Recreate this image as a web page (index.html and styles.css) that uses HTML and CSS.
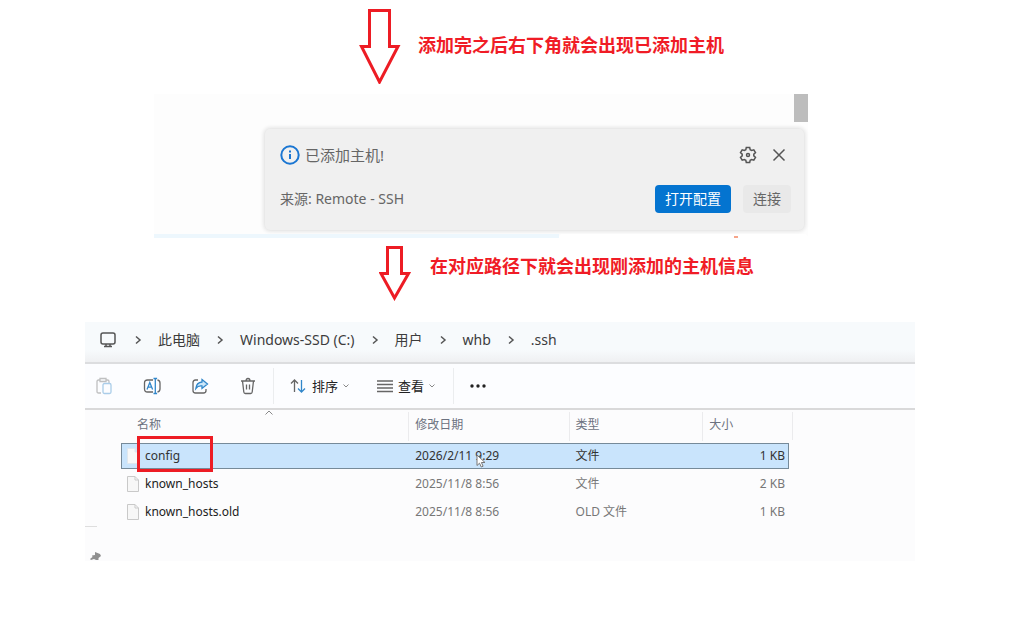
FILE: index.html
```html
<!DOCTYPE html>
<html lang="zh-CN">
<head>
<meta charset="utf-8">
<title>添加主机</title>
<link rel="stylesheet" href="styles.css">
</head>
<body>
<main class="page">
  <section class="step step-first">
    <svg class="arrow-large" width="42" height="76" viewBox="0 0 42 76"><path d="M10.500 2.500H30.500V38.500H39L20.500 74 2.500 38.500H10.500Z"/></svg>
    <h2 class="step-title">添加完之后右下角就会出现已添加主机</h2>
  </section>

  <section class="editor">
    <div class="scroll-thumb"></div>
    <div class="toast">
      <div class="toast-row toast-header">
        <svg class="info" width="20" height="20" viewBox="0 0 20 20"><circle cx="10" cy="10" r="8.700"/><path d="M10 9v5M10 5.500v2"/></svg>
        <p class="toast-title">已添加主机!</p>
        <button class="icon-button" aria-label="设置"><svg width="18" height="18" viewBox="0 0 18 18"><path d="M7.300 1.500h3.400l.5 2.200 1.400.8 2.200-.7 1.700 2.900-1.700 1.500v1.600l1.700 1.500-1.700 2.900-2.200-.7-1.400.8-.5 2.200H7.300l-.5-2.200-1.400-.8-2.200.7-1.700-2.900 1.700-1.500V8.200L1.500 6.700l1.700-2.900 2.200.7 1.400-.8z"/><circle cx="9" cy="9" r="1.500"/></svg></button>
        <button class="icon-button" aria-label="关闭"><svg width="14" height="14" viewBox="0 0 14 14"><path d="M1.500 1.500l11 11M12.500 1.500l-11 11"/></svg></button>
      </div>
      <div class="toast-row">
        <p class="toast-source">来源: Remote - SSH</p>
        <button class="button primary">打开配置</button>
        <button class="button">连接</button>
      </div>
    </div>
    <div class="status"><div class="status-blue"></div><div class="status-white"><i class="status-dot"></i></div></div>
  </section>

  <section class="step step-second">
    <svg class="arrow-small" width="32" height="56" viewBox="0 0 32 56"><path d="M8.500 2.500H22.500V28.500H29.500L15.500 53 2 28.500H8.500Z"/></svg>
    <h2 class="step-title">在对应路径下就会出现刚添加的主机信息</h2>
  </section>

  <section class="explorer">
    <nav class="crumbs" aria-label="路径">
      <svg class="line-icon" width="16" height="16" viewBox="0 0 16 16"><rect x="1" y="1" width="14" height="11" rx="2"/><path d="M6 12v2.500M10 12v2.500M4 14.500h8"/></svg>
      <svg class="chevron" width="8" height="10" viewBox="0 0 8 10"><path d="M2 1.500L6 5 2 8.500"/></svg>
      <a href="#">此电脑</a>
      <svg class="chevron" width="8" height="10" viewBox="0 0 8 10"><path d="M2 1.500L6 5 2 8.500"/></svg>
      <a href="#">Windows-SSD (C:)</a>
      <svg class="chevron" width="8" height="10" viewBox="0 0 8 10"><path d="M2 1.500L6 5 2 8.500"/></svg>
      <a href="#">用户</a>
      <svg class="chevron" width="8" height="10" viewBox="0 0 8 10"><path d="M2 1.500L6 5 2 8.500"/></svg>
      <a href="#">whb</a>
      <svg class="chevron" width="8" height="10" viewBox="0 0 8 10"><path d="M2 1.500L6 5 2 8.500"/></svg>
      <a href="#">.ssh</a>
    </nav>

    <div class="toolbar">
      <div class="tools">
        <button class="tool faded" aria-label="粘贴"><svg width="18" height="18" viewBox="0 0 18 18"><path d="M6 16H3.500Q2 16 2 14.500V4.500Q2 3 3.500 3H5M11 3h1.500Q14 3 14 4.500V6M5 1.500h6v3H5z"/><rect class="blue" x="8" y="6.500" width="8" height="10" rx="1.500"/></svg></button>
        <button class="tool" aria-label="重命名"><svg width="18" height="18" viewBox="0 0 18 18"><path d="M10 15H4.500Q1.500 15 1.500 12V6Q1.500 3 4.500 3H10M14.500 3Q17 3.500 17 6v6q0 2.500-2.500 3"/><path class="blue" d="M4 12.500L6.800 5.500 9.600 12.500M5 10.200h3.600M12.300 2v14M10.500 1.500h3.600M10.500 16.500h3.600"/></svg></button>
        <button class="tool" aria-label="共享"><svg width="18" height="18" viewBox="0 0 18 18"><path d="M7 3H4.500Q2 3 2 5.500v8Q2 16 4.500 16h8q2.500 0 2.500-2.500V12"/><path class="blue tint" d="M11 2.500L16.500 7 11 11.500V9Q7 8.500 4.800 11.500 5.500 5.500 11 5z"/></svg></button>
        <button class="tool" aria-label="删除"><svg width="18" height="18" viewBox="0 0 18 18"><path d="M2 4h14M3.500 4L4.800 15Q5 16.500 6.300 16.500h5.400Q13 16.500 13.200 15L14.500 4M7 4Q7 1.500 9 1.500T11 4M7.500 7.500v5M10.500 7.500v5"/></svg></button>
      </div>
      <div class="group">
        <button class="menu-button">
          <svg width="18" height="16" viewBox="0 0 18 16"><path d="M5.500 14V2M2 5.500L5.500 2 9 5.500"/><path class="blue" d="M12.500 2v12M9 10.500l3.500 3.500 3.500-3.500"/></svg>
          <span>排序</span>
          <svg class="caret" width="6" height="4" viewBox="0 0 6 4"><path d="M.5.500L3 3 5.500.500"/></svg>
        </button>
        <button class="menu-button">
          <svg width="16" height="14" viewBox="0 0 16 14"><path d="M0 2h16M0 5.500h16M0 9h16M0 12.500h16"/></svg>
          <span>查看</span>
          <svg class="caret" width="6" height="4" viewBox="0 0 6 4"><path d="M.5.500L3 3 5.500.500"/></svg>
        </button>
      </div>
      <div class="group">
        <button class="tool" aria-label="更多"><svg class="dots" width="18" height="18" viewBox="0 0 18 18"><circle cx="3" cy="9" r="1.700"/><circle cx="9" cy="9" r="1.700"/><circle cx="15" cy="9" r="1.700"/></svg></button>
      </div>
    </div>

    <div class="files">
      <div class="rail">
        <div class="rail-line"></div>
        <svg class="pin" width="12" height="9" viewBox="0 0 12 9"><path d="M5 0l5 2 1 2-2.500 2v2H6L4 7 1 8 0 7l2.500-2-.5-1.500L5 3z"/></svg>
      </div>
      <table class="list">
        <colgroup><col class="c-name"><col class="c-date"><col class="c-type"><col class="c-size"></colgroup>
        <thead>
          <tr>
            <th scope="col">名称<svg class="sort-mark" width="8" height="5" viewBox="0 0 8 5"><path d="M.5 4.500L4 1l3.500 3.500"/></svg></th>
            <th scope="col">修改日期</th><th scope="col">类型</th><th scope="col">大小</th>
          </tr>
        </thead>
        <tbody>
          <tr class="selected">
            <td><div class="file"><svg class="doc" width="12" height="16" viewBox="0 0 12 16"><path d="M.5.500h7.500l3.500 3.500v11.500H.5zM8 .500v3.500h3.500"/></svg>config</div><span class="highlight"></span></td>
            <td>2026/2/11 9:29<svg class="cursor" width="10" height="14" viewBox="0 0 10 14"><path d="M1 1v10.500l2.500-2.300L5.300 13l1.800-.8-1.700-3.700H9z"/></svg></td>
            <td>文件</td><td>1 KB</td>
          </tr>
          <tr>
            <td><div class="file"><svg class="doc" width="12" height="16" viewBox="0 0 12 16"><path d="M.5.500h7.500l3.500 3.500v11.500H.5zM8 .500v3.500h3.500"/></svg>known_hosts</div></td>
            <td>2025/11/8 8:56</td><td>文件</td><td>2 KB</td>
          </tr>
          <tr>
            <td><div class="file"><svg class="doc" width="12" height="16" viewBox="0 0 12 16"><path d="M.5.500h7.500l3.500 3.500v11.500H.5zM8 .500v3.500h3.500"/></svg>known_hosts.old</div></td>
            <td>2025/11/8 8:56</td><td>OLD 文件</td><td>1 KB</td>
          </tr>
        </tbody>
      </table>
    </div>
  </section>
</main>
</body>
</html>
```

FILE: styles.css
```css
* { box-sizing: border-box; }

body {
  margin: 0;
  background: #fff;
  color: #333;
  font: 14px/20px "Noto Sans", "Noto Sans CJK SC", sans-serif;
}

h2, p { margin: 0; }

button {
  margin: 0;
  padding: 0;
  border: 0;
  background: none;
  color: inherit;
  font: inherit;
}

svg {
  display: block;
  flex: none;
  fill: none;
  stroke: #666;
}

/* Steps */
.step { display: flex; align-items: center; }
.step-first { padding: 8px 0 10px 359px; gap: 17px; }
.step-second { padding: 7px 0 21px 379px; gap: 19px; }

.step-title {
  padding-bottom: 4px;
  color: #f01c26;
  font: bold 18px/24px "Noto Sans CJK SC", sans-serif;
}

.step-second .step-title { padding-bottom: 16px; }

.arrow-large, .arrow-small { stroke: #ed1c24; stroke-width: 3; }

/* Editor with notification */
.editor {
  display: flex;
  flex-direction: column;
  margin: 0 215px 0 154px;
  background: #fdfdfd;
}

.scroll-thumb {
  align-self: flex-end;
  width: 14px;
  height: 28px;
  background: #bdbdbd;
}

.toast {
  display: flex;
  flex-direction: column;
  gap: 20px;
  margin: 7px 4px 0 111px;
  padding: 16px 13px 17px 15px;
  border-radius: 5px;
  background: #f0f0f0;
  box-shadow: 0 0 4px 1px #dcdcdc;
  color: #666;
}

.toast-row { display: flex; align-items: center; }
.toast-header { padding-right: 3px; }
.toast-title { flex: 1; margin-left: 5px; font-size: 15px; }
.info { stroke: #1a76d2; stroke-width: 2; }

.icon-button {
  display: grid;
  place-items: center;
  width: 18px;
  height: 20px;
  margin-left: 13px;
}

.icon-button svg { stroke: #555; stroke-width: 1.500; }

.toast-source { flex: 1; }

.button {
  height: 28px;
  margin-left: 12px;
  padding: 0 10px;
  border-radius: 4px;
  background: #e9e9e9;
}

.button.primary { background: #0474d0; color: #fff; }

.status { display: flex; height: 4px; margin-top: 4px; }
.status-blue { width: 62%; background: #edf7fd; }
.status-white {
  display: flex;
  flex: 1;
  align-items: flex-end;
  justify-content: flex-end;
  padding-right: 70px;
  border-radius: 4px 4px 0 0;
  background: #fff;
}
.status-dot { width: 4px; height: 2px; background: #f6a58a; }

/* File explorer */
.explorer { margin: 0 108px 0 85px; background: #fcfcfd; }

.crumbs {
  display: flex;
  align-items: center;
  gap: 16px;
  height: 42px;
  padding: 0 15px 4px;
  border-bottom: 2px solid #dcdddf;
  background: linear-gradient(#f7fafc 70%, #eff0f2);
}

.crumbs a { color: #3c3c3c; text-decoration: none; white-space: nowrap; }
.line-icon { margin-right: 2px; stroke: #555; stroke-width: 1.500; }
.chevron { stroke: #555; stroke-width: 1.500; }

.toolbar {
  display: flex;
  align-items: center;
  height: 46px;
  border-bottom: 2px solid #d9d9da;
  background: #fcfdff;
  font-size: 13px;
}

.tools { display: flex; gap: 30px; padding: 0 16px 0 10px; }
.tool svg, .menu-button svg { stroke-width: 1.300; }
.tool .blue, .menu-button .blue { stroke: #3187ca; }
.tool .tint { fill: #cbe7fa; }
.faded { opacity: .4; }

.group {
  display: flex;
  align-items: center;
  gap: 28px;
  height: 36px;
  padding: 0 18px 0 15px;
  border-left: 1px solid #ebedef;
}

.menu-button { display: flex; align-items: center; gap: 5px; color: #222; }
.menu-button .caret { stroke: #888; stroke-width: 1; }
.tool .dots { fill: #222; stroke: none; }

.files { display: flex; padding-right: 126px; }

.rail {
  display: flex;
  flex-direction: column;
  justify-content: space-between;
  width: 36px;
  height: 151px;
  padding-top: 116px;
}

.rail-line { width: 12px; border-top: 1px solid #dedede; }
.pin { margin-left: 5px; fill: #909090; stroke: none; }

.list {
  flex: 1;
  align-self: flex-start;
  table-layout: fixed;
  border-spacing: 0 2px;
  color: #777;
  font-size: 12px;
}

.c-name { width: 43%; }
.c-date { width: 24%; }
.c-type { width: 20%; }
.c-size { width: 13%; }

.list th {
  position: relative;
  height: 29px;
  padding: 0 6px 4px;
  border-left: 1px solid #ebebed;
  color: #6c7280;
  font-weight: 400;
  text-align: left;
}

.list th:first-child { padding-left: 15px; border-left-color: transparent; }

.list th:last-child::after {
  content: "";
  position: absolute;
  top: 0;
  right: -4px;
  height: 28px;
  border-right: 1px solid #ebebed;
}

.sort-mark { position: absolute; top: -2px; left: 50%; stroke: #888; }

.list td {
  position: relative;
  height: 26px;
  padding: 0 7px;
  border: 1px solid transparent;
  border-width: 1px 0;
}

.list td:first-child { padding-left: 5px; border-left-width: 1px; color: #222; }
.list td:last-child { padding-right: 3px; border-right-width: 1px; text-align: right; }

.list .selected td {
  border-color: #768a99;
  background: #c9e4fc;
  color: #333;
}

.file { display: flex; align-items: center; gap: 6px; }
.doc { fill: #f7f7f7; stroke: #c9c9c9; }
.selected .doc { stroke: #dfe7ee; }

.highlight {
  position: absolute;
  top: -8px;
  left: 15px;
  width: 76px;
  height: 36px;
  border: 3px solid #ed1c24;
}

.cursor { position: absolute; top: 10px; left: 68px; fill: #fff; stroke: #777; }
```
